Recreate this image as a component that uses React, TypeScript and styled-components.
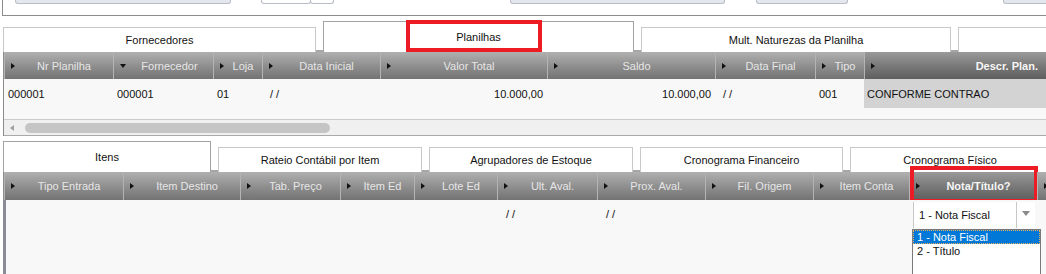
import React from "react";
import styled, {createGlobalStyle} from "styled-components";

const GlobalStyle = createGlobalStyle`
  body {
    margin: 0;
    background: #fff;
    font-family: "Liberation Sans", Arial, sans-serif;
    font-size: 11px;
    color: #111;
    overflow: hidden;
  }
`

const Page = styled.div`
  width: 1046px;
  height: 274px;
  overflow: hidden;
`

const TopPanel = styled.div`
  height: 15px;
  margin-left: 2px;
  border-left: 1px solid #8c8c8c;
  border-bottom: 1px solid #8c8c8c;
  display: flex;
  align-items: flex-start;
`
const Stub = styled.div<{ $gap: number; $w: number; $white?: boolean }>`
  flex: none;
  margin-left: ${p => p.$gap}px;
  width: ${p => p.$w}px;
  height: 4px;
  box-sizing: border-box;
  border: 1px solid #b9bdc8;
  border-top: none;
  border-radius: 0 0 3px 3px;
  background: ${p => p.$white ? '#fff' : '#e4e7ee'};
`

const TabBar = styled.div<{ $h: number; $top: number }>`
  position: relative;
  height: ${p => p.$h}px;
  margin-top: ${p => p.$top}px;
  margin-left: 3px;
  display: flex;
  align-items: flex-end;
  gap: 7px;
  background: linear-gradient(to top, #a6a6a6 2px, transparent 2px);
`
const Tab = styled.div<{ $w: number; $active?: boolean }>`
  flex: none;
  width: ${p => p.$w}px;
  height: ${p => p.$active ? 31 : 25}px;
  box-sizing: border-box;
  border: 1px solid ${p => p.$active ? '#a2a2a2' : '#c9c9c9'};
  border-bottom: none;
  background: #fff;
  display: flex;
  align-items: center;
  justify-content: center;
  white-space: nowrap;
  color: #111;
`
const Highlight = styled.div`
  position: absolute;
  box-sizing: border-box;
  border: 4px solid #ed1c24;
  pointer-events: none;
`
const TabHighlight = styled(Highlight)`
  left: 403px;
  top: 0;
  width: 136px;
  height: 32px;
`
const HeadHighlight = styled(Highlight)`
  left: 0;
  right: -1px;
  top: -6px;
  bottom: -3px;
`

const HeaderRow = styled.div<{ $h: number }>`
  display: flex;
  height: ${p => p.$h}px;
  margin-left: 3px;
  border-left: 1px solid #8c8c8c;
`
const HeadCell = styled.div<{ $w?: number; $active?: boolean }>`
  position: relative;
  flex: ${p => p.$w ? `0 0 ${p.$w}px` : '1 1 auto'};
  box-sizing: border-box;
  display: flex;
  align-items: center;
  padding-left: 6px;
  border-left: 1px solid #b4b4b4;
  background: ${p => p.$active
    ? 'linear-gradient(#9a9a9a, #777 55%, #5f5f5f)'
    : 'linear-gradient(#b0b0b0, #8d8d8d 55%, #737373)'};
  color: ${p => p.$active ? '#f6f6f6' : '#e6e6e6'};
  font-weight: ${p => p.$active ? 'bold' : 'normal'};
  white-space: nowrap;
  overflow: visible;
`
const Arrow = styled.span<{ $down?: boolean }>`
  flex: none;
  width: 0;
  height: 0;
  ${p => p.$down
    ? 'border-left: 3px solid transparent; border-right: 3px solid transparent; border-top: 4px solid #111;'
    : 'border-top: 3px solid transparent; border-bottom: 3px solid transparent; border-left: 4px solid #111;'}
`
const HeadLabel = styled.span<{ $right?: boolean }>`
  flex: 1;
  text-align: ${p => p.$right ? 'right' : 'center'};
  padding-right: ${p => p.$right ? 8 : 0}px;
  overflow: hidden;
`

const Body = styled.div<{ $border: number; $h?: number }>`
  position: relative;
  margin-left: 3px;
  border-left: ${p => p.$border}px solid ${p => p.$border > 1 ? '#8b8b95' : '#8c8c8c'};
  background: #f8f8f8;
  ${p => p.$h ? `height: ${p.$h}px;` : ''}
`
const DataRow = styled.div<{ $h: number }>`
  display: flex;
  height: ${p => p.$h}px;
`
const Cell = styled.div<{ $w?: number; $right?: boolean; $indent?: number; $shade?: boolean }>`
  position: relative;
  flex: ${p => p.$w ? `0 0 ${p.$w}px` : '1 1 auto'};
  box-sizing: border-box;
  display: flex;
  align-items: center;
  justify-content: ${p => p.$right ? 'flex-end' : 'flex-start'};
  padding: 0 4px 0 ${p => p.$indent ?? 4}px;
  background: ${p => p.$shade ? '#d3d3d3' : 'transparent'};
  white-space: nowrap;
`
const Filler = styled.div`
  height: 11px;
`
const HScroll = styled.div`
  height: 15px;
  border-top: 1px solid #cbcbcb;
  border-bottom: 1px solid #a9a9a9;
  background: #f0f0f0;
  display: flex;
  align-items: center;
  padding-left: 6px;
  gap: 11px;
`
const ScrollArrow = styled.span`
  width: 0;
  height: 0;
  border-top: 3px solid transparent;
  border-bottom: 3px solid transparent;
  border-right: 4px solid #a0a0a0;
`
const Thumb = styled.div`
  width: 305px;
  height: 10px;
  border-radius: 5px;
  background: #c5c5c5;
`

const EditCell = styled.div`
  position: relative;
  flex: 0 0 128px;
  box-sizing: border-box;
  padding: 2px 0 0 4px;
`
const Select = styled.div`
  width: 122px;
  height: 26px;
  box-sizing: border-box;
  border-left: 1px solid #c8c8c8;
  background: #fff;
  display: flex;
`
const SelectText = styled.div`
  flex: 0 0 102px;
  display: flex;
  align-items: center;
  padding-left: 5px;
  box-sizing: border-box;
  white-space: nowrap;
`
const SelectButton = styled.div`
  flex: 1;
  border-left: 1px solid #c8c8c8;
  display: flex;
  align-items: center;
  justify-content: center;
  &::after {
    content: "";
    border-left: 4px solid transparent;
    border-right: 4px solid transparent;
    border-top: 5px solid #8a8a8a;
    margin-top: -3px;
  }
`
const OptionList = styled.div`
  position: absolute;
  left: 3px;
  top: 29px;
  width: 129px;
  height: 50px;
  box-sizing: border-box;
  border: 1px solid #7a7a7a;
  border-bottom: none;
  background: #fff;
`
const Option = styled.div<{ $selected?: boolean }>`
  height: 14px;
  box-sizing: border-box;
  padding-left: 3px;
  display: flex;
  align-items: center;
  white-space: nowrap;
  background: ${p => p.$selected ? '#0078d7' : '#fff'};
  color: ${p => p.$selected ? '#fff' : '#111'};
  border: 1px dotted ${p => p.$selected ? '#e8b060' : 'transparent'};
`

type Col = { label: string; w?: number; down?: boolean; active?: boolean; right?: boolean }

const planCols: Col[] = [
    {label: 'Nr Planilha', w: 109},
    {label: 'Fornecedor', w: 100, down: true},
    {label: 'Loja', w: 49},
    {label: 'Data Inicial', w: 118},
    {label: 'Valor Total', w: 167},
    {label: 'Saldo', w: 168},
    {label: 'Data Final', w: 100},
    {label: 'Tipo', w: 49},
    {label: 'Descr. Plan.', active: true, right: true},
]

const itemCols: Col[] = [
    {label: 'Tipo Entrada', w: 119},
    {label: 'Item Destino', w: 117},
    {label: 'Tab. Preço', w: 100},
    {label: 'Item Ed', w: 74},
    {label: 'Lote Ed', w: 83},
    {label: 'Ult. Aval.', w: 100},
    {label: 'Prox. Aval.', w: 108},
    {label: 'Fil. Origem', w: 108},
    {label: 'Item Conta', w: 96},
    {label: 'Nota/Título?', w: 128, active: true},
    {label: ''},
]

const App = () => {
    return (
        <Page>
            <GlobalStyle/>
            <TopPanel>
                <Stub $gap={12} $w={216}/>
                <Stub $gap={30} $w={50} $white/>
                <Stub $gap={-1} $w={24} $white/>
                <Stub $gap={176} $w={215}/>
                <Stub $gap={31} $w={92}/>
                <Stub $gap={155} $w={60}/>
            </TopPanel>

            <TabBar $h={32} $top={4}>
                <Tab $w={313}>Fornecedores</Tab>
                <Tab $w={311} $active>Planilhas</Tab>
                <Tab $w={310}>Mult. Naturezas da Planilha</Tab>
                <Tab $w={100}/>
                <TabHighlight/>
            </TabBar>

            <HeaderRow $h={27}>
                {planCols.map(c =>
                    <HeadCell key={c.label} $w={c.w} $active={c.active}>
                        <Arrow $down={c.down}/>
                        <HeadLabel $right={c.right}>{c.label}</HeadLabel>
                    </HeadCell>
                )}
            </HeaderRow>
            <Body $border={1}>
                <DataRow $h={29}>
                    <Cell $w={109}>000001</Cell>
                    <Cell $w={100}>000001</Cell>
                    <Cell $w={49}>01</Cell>
                    <Cell $w={118} $indent={8}>/ /</Cell>
                    <Cell $w={167} $right>10.000,00</Cell>
                    <Cell $w={168} $right>10.000,00</Cell>
                    <Cell $w={100} $indent={8}>/ /</Cell>
                    <Cell $w={49}>001</Cell>
                    <Cell $shade $indent={3}>CONFORME CONTRAO</Cell>
                </DataRow>
                <Filler/>
                <HScroll>
                    <ScrollArrow/>
                    <Thumb/>
                </HScroll>
            </Body>

            <TabBar $h={36} $top={0}>
                <Tab $w={208} $active>Itens</Tab>
                <Tab $w={204}>Rateio Contábil por Item</Tab>
                <Tab $w={204}>Agrupadores de Estoque</Tab>
                <Tab $w={203}>Cronograma Financeiro</Tab>
                <Tab $w={200}>Cronograma Físico</Tab>
            </TabBar>

            <HeaderRow $h={28}>
                {itemCols.map((c, index) =>
                    <HeadCell key={index} $w={c.w} $active={c.active}>
                        <Arrow/>
                        <HeadLabel>{c.label}</HeadLabel>
                        {c.active && <HeadHighlight/>}
                    </HeadCell>
                )}
            </HeaderRow>
            <Body $border={3} $h={80}>
                <DataRow $h={28}>
                    <Cell $w={117}/>
                    <Cell $w={117}/>
                    <Cell $w={100}/>
                    <Cell $w={74}/>
                    <Cell $w={83}/>
                    <Cell $w={100} $indent={9}>/ /</Cell>
                    <Cell $w={108} $indent={9}>/ /</Cell>
                    <Cell $w={108}/>
                    <Cell $w={96}/>
                    <EditCell>
                        <Select>
                            <SelectText>1 - Nota Fiscal</SelectText>
                            <SelectButton/>
                        </Select>
                        <OptionList>
                            <Option $selected>1 - Nota Fiscal</Option>
                            <Option>2 - Título</Option>
                        </OptionList>
                    </EditCell>
                    <Cell/>
                </DataRow>
            </Body>
        </Page>
    );
}

export default App;
